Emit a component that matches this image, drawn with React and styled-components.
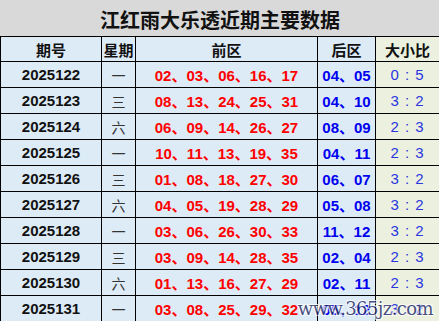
import React from 'react';
import styled, { createGlobalStyle } from 'styled-components';

const rows = [
  ['2025122', '一', '02、03、06、16、17', '04、05', '0 : 5'],
  ['2025123', '三', '08、13、24、25、31', '04、10', '3 : 2'],
  ['2025124', '六', '06、09、14、26、27', '08、09', '2 : 3'],
  ['2025125', '一', '10、11、13、19、35', '04、11', '2 : 3'],
  ['2025126', '三', '01、08、18、27、30', '06、07', '3 : 2'],
  ['2025127', '六', '04、05、19、28、29', '05、08', '3 : 2'],
  ['2025128', '一', '03、06、26、30、33', '11、12', '3 : 2'],
  ['2025129', '三', '03、09、14、28、35', '02、04', '2 : 3'],
  ['2025130', '六', '01、13、16、27、29', '02、11', '2 : 3'],
  ['2025131', '一', '03、08、25、29、32', '05、12', '3 : 2'],
];

function App() {
  return (
    <Page>
      <GlobalStyle />
      <Sheet>
        <Title>江红雨大乐透近期主要数据</Title>
        <Head>期号</Head>
        <Head>星期</Head>
        <Head>前区</Head>
        <Head>后区</Head>
        <Head $green>大小比</Head>
        {rows.map((r) => (
          <React.Fragment key={r[0]}>
            <Cell>{r[0]}</Cell>
            <Week>{r[1]}</Week>
            <Cell $color="#ff0000">{r[2]}</Cell>
            <Cell $color="#0000ee">{r[3]}</Cell>
            <Ratio>{r[4]}</Ratio>
          </React.Fragment>
        ))}
      </Sheet>
      <Watermark>www.365jz.com</Watermark>
    </Page>
  );
}

const GlobalStyle = createGlobalStyle`
  body {
    margin: 0;
    background: #ffffff;
  }
`;

const Page = styled.div`
  position: relative;
  width: 439px;
  height: 321px;
  overflow: hidden;
`;

const Sheet = styled.div`
  display: grid;
  grid-template-columns: 100px 33px 181px 57px 63px;
  grid-template-rows: 36px 24px repeat(10, 25px);
  gap: 1px;
  padding-left: 1px;
  background: #000000;
  font-family: "Liberation Sans", Arial, "Noto Sans CJK SC", sans-serif;
`;

const Title = styled.div`
  grid-column: 1 / -1;
  margin-left: -1px;
  padding-left: 1px;
  padding-top: 2px;
  display: flex;
  align-items: center;
  justify-content: center;
  background: #d9d9d9;
  font-family: "Noto Sans CJK SC", sans-serif;
  font-size: 20px;
  font-weight: 700;
  color: #111111;
`;

const Head = styled.div`
  display: flex;
  align-items: center;
  justify-content: center;
  background: ${(p) => (p.$green ? '#ebf1de' : '#ddebf7')};
  font-family: "Noto Sans CJK SC", sans-serif;
  font-size: 15px;
  font-weight: 700;
  color: #111111;
`;

const Cell = styled.div`
  display: flex;
  align-items: center;
  justify-content: center;
  background: #ddebf7;
  font-size: 15px;
  font-weight: 700;
  color: ${(p) => p.$color || '#111111'};
  white-space: nowrap;
`;

const Week = styled(Cell)`
  font-family: "Noto Sans CJK SC", sans-serif;
  font-size: 14px;
  font-weight: 400;
  color: #333333;
`;

const Ratio = styled.div`
  display: flex;
  align-items: center;
  justify-content: center;
  background: #ebf1de;
  font-size: 15px;
  color: #2b35e0;
  letter-spacing: 1px;
  white-space: pre;
`;

const Watermark = styled.div`
  position: absolute;
  right: 6px;
  bottom: 2px;
  font-family: "DejaVu Serif", serif;
  font-size: 18px;
  letter-spacing: -0.6px;
  color: #1e2a66;
  opacity: 0.8;
  text-shadow: 1px 1px 0 #ffffff, -1px -1px 0 #ffffff, 1px -1px 0 #ffffff, -1px 1px 0 #ffffff;
`;

export default App;
